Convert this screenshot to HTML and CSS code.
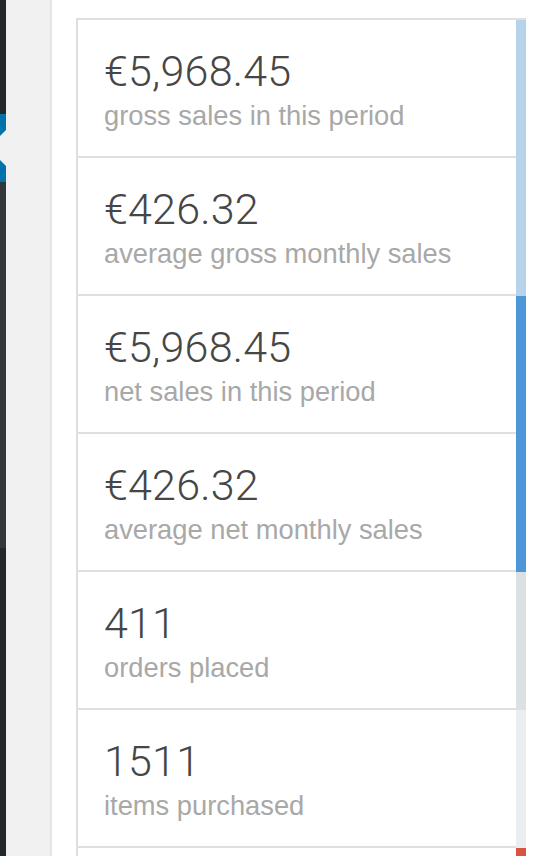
FILE: index.html
```html
<!DOCTYPE html>
<html lang="en">
<head>
<meta charset="utf-8">
<title>Sales report legend</title>
<link rel="stylesheet" href="styles.css">
</head>
<body>
<div class="page">
  <nav class="adminmenu">
    <div class="menu-top"></div>
    <div class="menu-current"><span class="notch"></span></div>
    <div class="menu-sub"></div>
    <div class="menu-rest"></div>
  </nav>
  <div class="gutter"></div>
  <div class="postbox">
    <ul class="chart-legend">
      <li class="c-gross"><strong>€5,968.45</strong><span class="label">gross sales in this period</span></li>
      <li class="c-gross"><strong>€426.32</strong><span class="label">average gross monthly sales</span></li>
      <li class="c-net"><strong>€5,968.45</strong><span class="label">net sales in this period</span></li>
      <li class="c-net"><strong>€426.32</strong><span class="label">average net monthly sales</span></li>
      <li class="c-orders"><strong>411</strong><span class="label">orders placed</span></li>
      <li class="c-items"><strong>1511</strong><span class="label">items purchased</span></li>
      <li class="c-refund legend-empty"></li>
    </ul>
  </div>
</div>
</body>
</html>
```
FILE: styles.css
```css
html, body {
  margin: 0;
  padding: 0;
  height: 100%;
  overflow: hidden;
  background: #fff;
}
.page {
  display: flex;
  height: 856px;
}
.adminmenu {
  width: 6px;
  flex: none;
  display: flex;
  flex-direction: column;
  overflow: hidden;
}
.menu-top { height: 114px; background: #23282d; }
.menu-current {
  height: 68px;
  background: #0073aa;
  position: relative;
}
.notch {
  position: absolute;
  right: 0;
  top: 16px;
  width: 0;
  height: 0;
  border-top: 18px solid transparent;
  border-bottom: 18px solid transparent;
  border-right: 18px solid #f1f1f1;
}
.menu-sub { height: 366px; background: #32373c; }
.menu-rest { flex: 1; background: #23282d; }
.gutter {
  width: 44px;
  flex: none;
  background: #f1f1f1;
}
.postbox {
  flex: 1;
  background: #fff;
  border-left: 2px solid #e5e5e5;
  padding: 18px 0 0 24px;
}
.chart-legend {
  list-style: none;
  margin: 0;
  padding: 0;
  width: 450px;
  box-sizing: border-box;
  border-top: 2px solid #dfdfdf;
  border-left: 2px solid #dfdfdf;
}
.chart-legend li {
  display: block;
  margin: 0;
  padding: 26px 24px 24px 26px;
  font-family: "Liberation Sans", Arial, sans-serif;
  font-size: 27.3px;
  line-height: 36px;
  color: #a8a8a8;
  border-right: 10px solid #aaa;
  box-shadow: inset 0 -2px 0 0 #dfdfdf;
  white-space: nowrap;
}
.chart-legend li strong {
  display: block;
  font-family: Roboto, "Liberation Sans", sans-serif;
  font-weight: 300;
  font-size: 43px;
  line-height: 50px;
  letter-spacing: 0.2px;
  color: #464646;
}
.chart-legend li .label {
  display: block;
  padding-top: 2px;
}
.chart-legend li.legend-empty {
  height: 88px;
}
.c-gross { border-right-color: #b6d3e9 !important; }
.c-net { border-right-color: #4d96d7 !important; }
.c-orders { border-right-color: #dbe0e3 !important; }
.c-items { border-right-color: #ebeef0 !important; }
.c-refund { border-right-color: #d9543f !important; }
```
